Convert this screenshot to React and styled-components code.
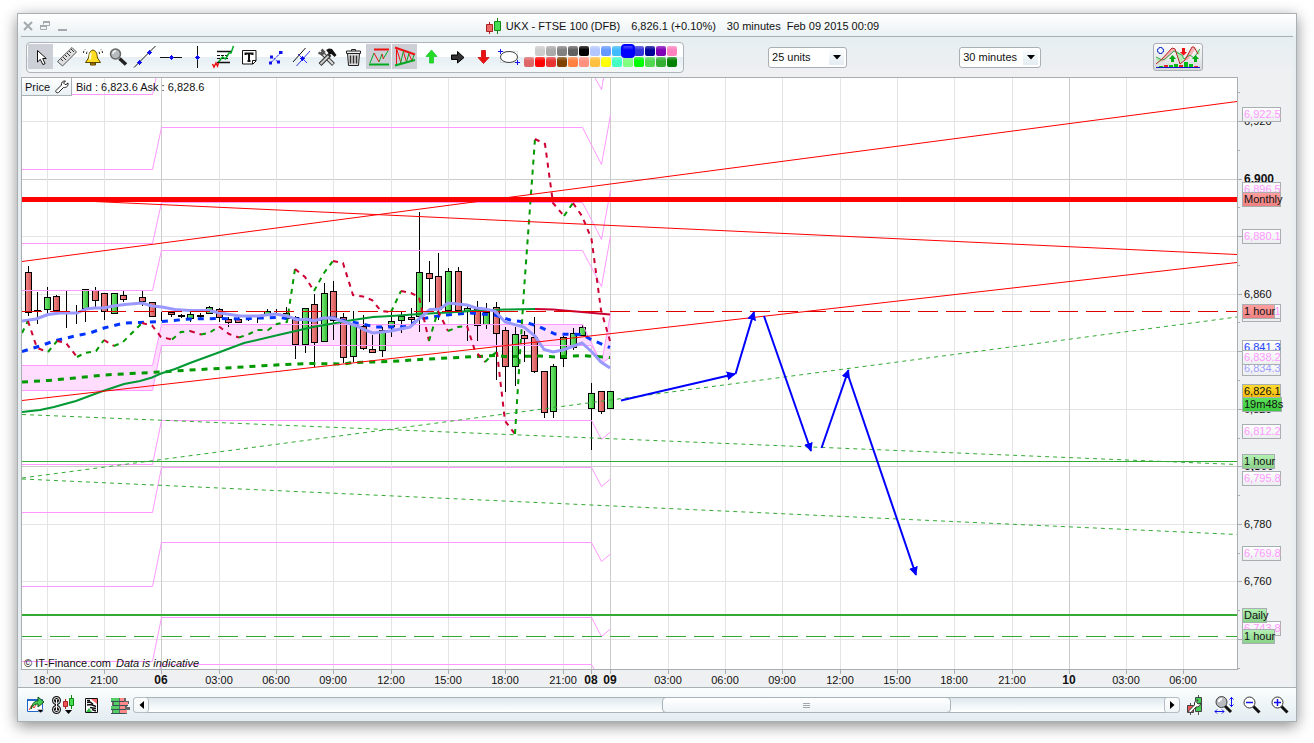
import styled, { createGlobalStyle } from "styled-components";

const GlobalStyle = createGlobalStyle`
  * {
    box-sizing: border-box;
  }
  body {
    margin: 0;
    padding: 13px 17px 21px;
    background: #fff;
    color: #111;
    font-family: "Liberation Sans", Arial, sans-serif;
    font-size: 11px;
    line-height: 14px;
  }
  button,
  select {
    font: inherit;
    color: inherit;
    margin: 0;
    padding: 0;
  }
`;

const Window = styled.main`
  padding: 0 3px;
  border: 1px solid #a9afb3;
  background: #e6eef2;
  box-shadow: 0 4px 14px rgba(0, 0, 0, 0.45);
`;

const TitleBar = styled.header`
  display: flex;
  align-items: center;
  height: 22px;
  margin: 0 -3px;
  padding: 2px 3px 0;
  background: linear-gradient(#fff, #eaf1f4);
`;

const WindowControls = styled.div`
  display: flex;
  gap: 3px;
`;

const ControlButton = styled.button`
  display: flex;
  border: 0;
  background: none;
`;

const Title = styled.h1`
  display: flex;
  flex: 1;
  align-items: center;
  justify-content: center;
  gap: 11px;
  margin: 0;
  padding-left: 3px;
  font-size: 11px;
  font-weight: normal;
`;

const TitlePart = styled.span`
  display: flex;
  align-items: center;
  gap: 4px;
  white-space: pre;
`;

const ToolRow = styled.div`
  display: flex;
  align-items: center;
  height: 41px;
  padding-left: 5px;
  border-top: 1px solid #a9b0b4;
  background: linear-gradient(#e6eef2, #eff0f2);
`;

const ToolPanel = styled.div`
  display: flex;
  align-items: center;
  gap: 1px;
  height: 31px;
  padding: 0 6px 1px 1px;
  border: 1px solid #aeb4b9;
  border-radius: 4px;
  background: linear-gradient(#fbfdfe, #fff 48%, #e5eff4 50%, #f4f8fa);
`;

const ToolButton = styled.button`
  display: flex;
  width: 25px;
  height: 25px;
  border: 0;
  background: ${(p) => (p.$active ? "#ccd0d6" : "none")};
`;

const Palette = styled.div`
  display: flex;
  flex-direction: column;
  align-items: flex-end;
  gap: 1px;
  padding-left: 2px;
`;

const PaletteRow = styled.div`
  display: flex;
  gap: 1px;
`;

const Swatch = styled.button`
  position: relative;
  z-index: ${(p) => (p.$active ? 1 : 0)};
  width: 10px;
  height: 10px;
  border: 0;
  border-radius: 2px;
  background: linear-gradient(rgba(255, 255, 255, 0.3), rgba(255, 255, 255, 0) 40%)
    ${(p) => p.$color};
  box-shadow: ${(p) => (p.$active ? `0 0 0 2px ${p.$color}` : "none")};
`;

const Spacer = styled.div`
  flex: ${(p) => p.$grow};
`;

const SelectBox = styled.div`
  position: relative;
  width: ${(p) => p.$width}px;
`;

const Select = styled.select`
  display: block;
  width: 100%;
  height: 21px;
  padding-left: 3px;
  border: 1px solid #a9afb4;
  border-radius: 3px;
  background: #fff;
  appearance: none;
`;

const SelectArrow = styled.span`
  position: absolute;
  top: 3px;
  right: 3px;
  display: flex;
  align-items: center;
  justify-content: center;
  width: 15px;
  height: 15px;
  background: linear-gradient(#fafcfd, #e2ecf2);
  pointer-events: none;
`;

const IndicatorButton = styled.button`
  display: flex;
  width: 50px;
  height: 28px;
  border: 1px solid #a9afb4;
  border-radius: 3px;
  background: linear-gradient(#fdfdfd, #d6d8da);
`;

const ChartArea = styled.section`
  position: relative;
`;

const ChartSvg = styled.svg`
  display: block;
  width: 100%;
  height: auto;
  background: #eff0f2;
`;

const ChartHeader = styled.div`
  position: absolute;
  top: 0;
  left: 0;
  display: flex;
  align-items: center;
  gap: 4px;
`;

const PriceButton = styled.button`
  display: flex;
  align-items: center;
  justify-content: space-between;
  width: 51px;
  height: 19px;
  padding: 0 2px 0 3px;
  border: 1px solid #a9b0b4;
  background: linear-gradient(#fff, #e9f0f4);
`;

const Copyright = styled.div`
  position: absolute;
  left: 3px;
  bottom: 17px;
  display: flex;
  gap: 5px;
`;

const Footer = styled.footer`
  display: flex;
  align-items: center;
  height: 34px;
  margin: 0 -3px;
  padding: 1px 6px 0 8px;
  border-top: 1px solid #a9b0b4;
  background: linear-gradient(#fafefe, #e3ecf1);
`;

const FooterButton = styled.button`
  display: flex;
  width: ${(p) => p.$width || 20}px;
  height: 20px;
  margin-right: ${(p) => p.$gap || 0}px;
  border: 0;
  background: none;
`;

const Scrollbar = styled.div`
  display: flex;
  flex: 1;
  height: 16px;
  margin-right: 6px;
  border: 1px solid #a9b4ba;
  border-radius: 4px;
  background: linear-gradient(#dfe9ee, #f6fafb 70%, #fff);
`;

const ScrollButton = styled.button`
  display: flex;
  align-items: center;
  justify-content: center;
  width: 14px;
  border: 0;
  border-radius: 3px;
  background: linear-gradient(#fff, #f1f6f8);
  box-shadow: 0 0 0 1px #b4bec4;
`;

const ScrollTrack = styled.div`
  display: flex;
  flex: 1;
`;

const ScrollThumb = styled.div`
  display: flex;
  align-items: center;
  justify-content: center;
  width: 28.5%;
  margin: -1px 0 -1px 50.5%;
  border: 1px solid #a9b4ba;
  border-radius: 4px;
  background: linear-gradient(#fff, #edf3f6);
`;

const Icon = ({ w = 25, h = 25, children }) => (
  <svg width={w} height={h} viewBox={`0 0 ${w} ${h}`} fill="none" aria-hidden="true">
    {children}
  </svg>
);

const Cross = ({ x, y }) => (
  <path
    d={`M${x - 2.5} ${y}h5M${x} ${y - 2.5}v5M${x - 1.5} ${y - 1.5}l3 3M${x + 1.5} ${y - 1.5}l-3 3`}
    stroke="#1111ee"
  />
);

const tools = [
  {
    name: "Pointer",
    active: true,
    icon: (
      <path d="M9.5 6.5V18l2.8-2.6 2.6 5.2 2.2-1-2.4-5.1h3.6Z" fill="#fff" stroke="#111" />
    ),
  },
  {
    name: "Ruler",
    icon: (
      <>
        <path d="m3.5 17.5 14.5-14 4.5 4.5-14 14Z" fill="#ddd" stroke="#555" />
        <path d="m7 15 2 2m0-4 3 3m-1-5 2 2m0-4 3 3m-1-5 2 2m0-4 3 3" stroke="#333" />
      </>
    ),
  },
  {
    name: "Alarm",
    icon: (
      <>
        <path
          d="M13 6c-4 1-4 5-4.5 8L5.500 18.500h15L17.5 14c-.5-3-.5-7-4.500-8Z"
          fill="#ffdd22"
          stroke="#5a4600"
        />
        <path d="M11 9c-1 2-1 4-1 6.500" stroke="#fffbd0" strokeWidth="2" />
        <path d="M10.5 19h5v2h-5z" fill="#cc8800" stroke="#5a4600" />
        <path
          d="M3.500 9c0-1.500.5-2.500 1.500-3.500M6.500 10c0-1.500.5-2.500 1-3M22.500 9c0-1.500-.5-2.500-1.500-3.500M19.500 10c0-1.500-.5-2.500-1-3"
          stroke="#222"
          strokeDasharray="2 1"
        />
      </>
    ),
  },
  {
    name: "Zoom",
    icon: (
      <>
        <path d="m13.5 14.500 6.500 6" stroke="#222" strokeWidth="3.5" />
        <circle cx="9.5" cy="10" r="5" fill="#b5bbbf" stroke="#666" strokeWidth="1.5" />
        <path d="M7 10c0-2 1-3 3-3" stroke="#f2f4f5" strokeWidth="1.5" />
      </>
    ),
  },
  {
    name: "Trend line",
    icon: (
      <>
        <path d="M2 23.5 23.5 2" stroke="#111" />
        <Cross x={7.5} y={18.5} />
        <Cross x={17.5} y={8.5} />
      </>
    ),
  },
  {
    name: "Horizontal line",
    icon: (
      <>
        <path d="M2 13.5h22" stroke="#111" />
        <Cross x={13.5} y={13.5} />
      </>
    ),
  },
  {
    name: "Vertical line",
    icon: (
      <>
        <path d="M13.5 2v22" stroke="#111" />
        <Cross x={13.5} y={13.5} />
      </>
    ),
  },
  {
    name: "Fibonacci",
    icon: (
      <>
        <path d="M7 7.5h14M7 18.5h13" stroke="#111" strokeWidth="1.5" />
        <path d="M7 11.5h12M7 14.5h12" stroke="#111" strokeDasharray="3 1" />
        <path d="m2.500 20 1.500 3 2-4 1.500 3 1-3" stroke="#e11" strokeWidth="1.5" />
        <path d="m8.500 18 4-5 3 2 3.500-6h2l2.500-7" stroke="#0a2" strokeWidth="1.5" />
      </>
    ),
  },
  {
    name: "Text",
    icon: (
      <>
        <path d="M6.5 6.5h13.5V17l-3 3H6.5Z" fill="#fff" stroke="#111" />
        <path d="M16.5 20v-3.5H20" stroke="#111" />
        <path d="M9.5 11V9.5h7V11M13 9.500v8M11.5 17h3" stroke="#111" strokeWidth="2" />
      </>
    ),
  },
  {
    name: "Segment",
    icon: (
      <>
        <path d="m9 18.500 9-9" stroke="#11e" strokeDasharray="3 1" />
        <path d="m9.500 12.500 7 6" stroke="#33f" strokeDasharray="2 1" />
        <path d="M7 17.500h3v3H7zM17 7h3.500v3h-3.500zM8 11.500h3v3H8zM15 16.500h3v3h-3z" fill="#11e" />
      </>
    ),
  },
  {
    name: "Parallel lines",
    icon: (
      <>
        <path d="M5 18 17.5 4" stroke="#111" />
        <path d="M8.500 22 22 7M10 10l9 9" stroke="#33e" />
        <Cross x={14.5} y={14.5} />
      </>
    ),
  },
  {
    name: "Settings",
    icon: (
      <>
        <path d="m7 8 12.5 12.5" stroke="#444" strokeWidth="4" />
        <path d="m8 9 11 11" stroke="#ddd" strokeWidth="2" />
        <path d="M4.500 8.500 8 10.500 10 8 7.500 5.500" stroke="#555" strokeWidth="2.5" />
        <path d="M6 20.500 16 10.500" stroke="#333" strokeWidth="4" />
        <path d="m6.500 20 8-8" stroke="#ccc" strokeWidth="2" />
        <path d="m12 6 3-1.500 3 .5 4.500 6-2 2-3-3-2 .5-3-4Z" fill="#111" />
      </>
    ),
  },
  {
    name: "Delete",
    icon: (
      <>
        <path d="M7.5 9.5h12l-1 12h-10Z" fill="#ddd" stroke="#222" />
        <path d="M6.5 7h14v2.5h-14zM11.5 7V5.5h4V7" fill="#eee" stroke="#222" />
        <path d="M10.5 11.5v8M13.5 11.5v8M16.5 11.5v8" stroke="#333" strokeWidth="1.5" />
      </>
    ),
  },
  {
    name: "Range lines",
    active: true,
    icon: (
      <>
        <path d="M8 5.5h15" stroke="#e11" strokeWidth="2" />
        <path d="M3 20.5h20" stroke="#0a2" strokeWidth="2" />
        <path d="M4 19 8 9M13 18l3-8M17 15l5-8" stroke="#0a2" />
        <path d="m8 9 5 9M16 10l1.500 5" stroke="#e11" />
      </>
    ),
  },
  {
    name: "Triangle lines",
    active: true,
    icon: (
      <>
        <path d="m3 3.500 20 7" stroke="#e11" strokeWidth="2" />
        <path d="m3 21.500 20-5.500" stroke="#0a2" strokeWidth="2" />
        <path d="M4.500 5v15M5 6l4 13M11.500 8l3 10M17 10l3 7" stroke="#e11" />
        <path d="m8.500 19 3-12M14.500 18 17 9M20 17l2-6" stroke="#0a2" />
      </>
    ),
  },
  {
    name: "Up arrow",
    icon: <path d="m13.500 6 5.500 6.500h-3.500V19h-4v-6.500H8Z" fill="#2d2" stroke="#3c4" />,
  },
  {
    name: "Right arrow",
    icon: <path d="M7.500 11h6V7.500l6.500 6-6.500 5.500v-3.500h-6Z" fill="#333" stroke="#000" />,
  },
  {
    name: "Down arrow",
    icon: <path d="M11.500 6.500h4v7H19l-5.500 6L8 13.500h3.500Z" fill="#e11" stroke="#c22" />,
  },
  {
    name: "Ellipse",
    icon: (
      <>
        <path d="M4.5 7.5h17v11h-17z" stroke="#bbb" strokeDasharray="1 1" />
        <ellipse cx="13" cy="13" rx="8.5" ry="5.5" fill="#fff" stroke="#444" />
        <path d="M2 7.5h5M4.5 5v5M19 18.5h5M21.5 16v5" stroke="#11e" />
      </>
    ),
  },
];

const paletteTop = [
  "#cccccc", "#aaaaaa", "#808080", "#606060", "#000000", "#b4c6ff", "#6699ff",
  "#40bbff", "#0000ff", "#3333dd", "#000099", "#8000b8", "#ff80c0",
];

const paletteBottom = [
  "#dd6666", "#ff0000", "#e83333", "#804000", "#ff8040", "#ff9080", "#ffc040",
  "#ffff00", "#44ffc4", "#80ff80", "#00ff00", "#50d850", "#33b033", "#008000",
];

const timeLabels = [
  [47, "18:00"], [104, "21:00"], [161, "06", true], [219, "03:00"], [276, "06:00"],
  [333, "09:00"], [391, "12:00"], [448, "15:00"], [505, "18:00"], [563, "21:00"],
  [591, "08", true], [610, "09", true], [668, "03:00"], [725, "06:00"],
  [782, "09:00"], [840, "12:00"], [897, "15:00"], [954, "18:00"], [1012, "21:00"],
  [1069, "10", true], [1126, "03:00"], [1183, "06:00"],
];

// levels fully covered by a tag have no label
const priceLevels = [
  [121, "6,920"], [179, "6,900", true], [236], [294, "6,860"], [351],
  [409, "6,820"], [466, "6,800", true], [524, "6,780"], [581, "6,760"], [639],
];

const halfTicks = [92, 150, 207, 265, 322, 380, 438, 495, 553, 610, 668];

const PINK = "#ff99ff";

// top, text, text colour, fill, width
const priceTags = [
  [107, "6,922.5", PINK, "url(#tagWhite)", 38],
  [182, "6,896.5", PINK, "url(#tagWhite)", 38],
  [192, "Monthly", "#111", "url(#tagRed)", 38],
  [229, "6,880.1", PINK, "url(#tagWhite)", 38],
  [307, "", PINK, "url(#tagWhite)", 38],
  [304, "6,854.1", PINK, "url(#tagWhite)", 38],
  [304, "1 hour", "#111", "url(#tagRed)", 32],
  [340, "6,841.3", "#2244ff", "url(#tagWhite)", 38],
  [361, "6,834.3", "#a0a0f8", "url(#tagWhite)", 38],
  [350, "6,838.2", PINK, "url(#tagWhite)", 38],
  [384, "6,826.1", "#111", "url(#tagGold)", 38],
  [397, "19m48s", "#111", "url(#tagLime)", 39],
  [424, "6,812.2", PINK, "url(#tagWhite)", 38],
  [454, "1 hour", "#111", "url(#tagGreen)", 32],
  [471, "6,795.8", PINK, "url(#tagWhite)", 38],
  [546, "6,769.8", PINK, "url(#tagWhite)", 38],
  [621, "6,743.8", PINK, "url(#tagWhite)", 38],
  [608, "Daily", "#111", "url(#tagGreen)", 24],
  [629, "1 hour", "#111", "url(#tagGreen)", 32],
];

// x, high, low, body top, body bottom, rising
const candles = [
  [28, 266, 316, 272, 312, 0], [37, 292, 324, 310, 311, 0], [47, 287, 314, 297, 309, 1],
  [56, 295, 311, 296, 310, 0], [66, 291, 328, 311, 311, 0], [76, 305, 324, 311, 311, 0],
  [85, 289, 322, 289, 308, 1], [95, 287, 308, 290, 300, 0], [104, 293, 320, 293, 311, 0],
  [114, 293, 314, 293, 313, 1], [123, 291, 302, 295, 299, 0], [142, 291, 306, 297, 301, 0],
  [152, 302, 317, 302, 316, 0], [161, 312, 321, 314, 314, 0], [171, 311, 317, 312, 314, 0],
  [181, 314, 318, 315, 316, 0], [190, 312, 322, 314, 318, 1], [200, 313, 320, 315, 316, 0],
  [209, 306, 314, 307, 313, 1], [219, 308, 322, 309, 317, 0], [228, 317, 327, 319, 322, 0],
  [238, 317, 323, 319, 322, 0], [248, 318, 321, 319, 319, 0], [257, 317, 323, 319, 319, 0],
  [267, 309, 315, 311, 314, 1], [276, 309, 315, 312, 312, 0], [286, 307, 318, 313, 318, 1],
  [295, 316, 359, 317, 344, 0], [305, 308, 353, 308, 344, 1], [314, 294, 367, 304, 342, 0],
  [324, 283, 342, 293, 341, 1], [333, 281, 340, 291, 320, 0], [343, 313, 363, 317, 357, 0],
  [353, 311, 362, 324, 356, 1], [363, 315, 350, 326, 348, 0], [372, 335, 353, 349, 352, 0],
  [382, 327, 357, 330, 350, 1], [391, 312, 337, 321, 326, 1], [401, 311, 333, 316, 320, 1],
  [411, 308, 326, 317, 319, 0], [419, 212, 332, 272, 316, 1], [429, 261, 302, 273, 278, 0],
  [438, 253, 320, 276, 309, 0], [448, 268, 313, 271, 310, 1], [458, 267, 312, 271, 310, 0],
  [467, 306, 341, 308, 311, 1], [477, 301, 341, 309, 325, 0], [486, 303, 329, 312, 324, 1],
  [496, 302, 380, 307, 333, 0], [505, 327, 392, 330, 366, 0], [515, 327, 386, 334, 366, 1],
  [524, 331, 362, 335, 338, 0], [534, 317, 373, 337, 371, 0], [544, 371, 418, 371, 412, 0],
  [553, 364, 418, 366, 411, 1], [563, 336, 367, 337, 358, 1], [573, 328, 350, 333, 347, 1],
  [582, 325, 336, 327, 335, 1], [591, 383, 450, 393, 408, 1], [601, 391, 414, 391, 411, 0],
  [610, 391, 409, 391, 408, 1],
];

const pivots = [
  "22,94.5 152.5,94.5 156,78",
  "595,78 601.5,89.5 603.5,78",
  "22,169.5 152.5,169.5 161.5,127.5 582.5,127.5 601.5,164.5 610.5,115",
  "22,243.5 152.5,243.5 161.5,202.5 582.5,202.5 601.5,239.5 610.5,190",
  "22,290.5 152.5,290.5 161.5,250.5 582.5,250.5 601.5,286.5 610.5,236",
  "22,365.5 152.5,365.5 161.5,324.5 582.5,324.5 601.5,363.5 610.5,314",
  "22,390.5 152.5,390.5 161.5,345.5 591.5,345.5 601.5,363.5 610.5,357",
  "22,464.5 152.5,464.5 161.5,420.5 591.5,420.5 601.5,439.5 610.5,432",
  "22,512.5 152.5,512.5 161.5,467.5 591.5,467.5 601.5,486.5 610.5,479",
  "22,586.5 152.5,586.5 161.5,542.5 591.5,542.5 601.5,561.5 610.5,554",
  "22,661.5 152.5,661.5 161.5,617.5 591.5,617.5 601.5,636.5 610.5,629",
  "160,669 161.5,664.5 591.5,664.5 594,669",
];

const band =
  "22,365.5 152.5,365.5 161.5,324.5 582.5,324.5 601.5,363.5 610.5,314 610.5,357 601.5,363.5 591.5,345.5 161.5,345.5 152.5,390.5 22,390.5";

const slowAverage =
  "22,412 40,410 54,407 76,401 100,392 124,384 140,381 152,377.5 161,373.5 175,369 190,363 220,352 244,343 276,335.5 313,327 333,323.5 353,320 373,317 391,316 420,314 448,312.5 480,310.5 505,309.5 535,309";
const slowAverageDown = "535,309 553,309.5 570,311 582,312 610,314.5";
const baseAverage =
  "22,382 48,380.5 75,378 104,375 140,373 161,372 190,370 219,368.5 250,366.5 276,365 310,363.5 344,364 353,362.5 391,361.5 420,359.5 448,358 495,355.5 505,356.5 540,356 555,357 582,355.5 610,357.5";
const midAverage =
  "22,351.5 40,346 54,341 75,336 90,333 104,328 124,323 140,322.5 161,321.5 190,319 220,318.5 240,319 260,318 280,317.5 290,319 304,319 315,320.5 325,318 335,318 345,321 360,323.5 375,327 391,327 405,326.5 410,325 420,319 445,315 470,313 495,315 510,320 525,322 540,327 555,334 582,334.5 592,340 610,347.5";
const fastAverage =
  "22,321 36,319 48,314.5 60,313 77,313 86,309 95,308 104,308 113,306 125,304.5 142,303 152,306 162,307 175,309.5 190,310.5 209,310.5 220,313 240,316 258,316 275,314 287,316 298,320 306,319 314,321 323,318 333,318 345,322 357,326 365,330 373,333 391,331 410,327 420,318 430,309.5 440,309 448,303 467,305 476,308 485,309 495,311 505,322 524,327 535,336 544,349.5 553,352 563,350 582,343 592,352 601,362 610,368";

const signals = [
  ["22,333 28,321", 1],
  ["28,321 37,348 48,352", 0],
  ["48,352 57,341", 1],
  ["57,341 66,343 77,357", 0],
  ["77,357 85,353 96,351 104,340", 1],
  ["104,340 114,346", 0],
  ["114,346 123,342 133,332 142,323", 1],
  ["142,323 152,325.5 161,337 172,339.5", 0],
  ["172,339.5 181,332 190,331", 1],
  ["190,331 201,334.5", 0],
  ["201,334.5 209,333 219,326.5", 1],
  ["219,326.5 229,334 239,337.5", 0],
  ["239,337.5 249,334 257,330 268,330 277,324 287,322 295,269", 1],
  ["295,269 305,277 314,291", 0],
  ["314,291 324,273 333,261", 1],
  ["333,261 343,263 353,295 363,296.5 372,300 381,311 391,312", 0],
  ["391,312 401,291", 1],
  ["401,291 411,293 419,297 429,341", 0],
  ["429,341 438,311", 1],
  ["438,311 448,331", 0],
  ["448,331 458,327 467,326", 1],
  ["467,326 475,351 485,362", 0],
  ["485,362 491,356 497,352", 1],
  ["497,352 505,421 515,434", 0],
  ["515,434 524,290 535,139", 1],
  ["535,139 545,144 553,203 564,216", 0],
  ["564,216 573,203", 1],
  ["573,203 582,216 591.5,239 601,310 610,341", 0],
];

const arrows = [
  [621, 400.5, 735, 374],
  [735.5, 374, 754, 312],
  [764, 316, 811, 451],
  [821.5, 448, 848.5, 370],
  [849, 378, 916, 575],
];

const TagGradient = ({ id, from, to }) => (
  <linearGradient id={id} x1="0" y1="0" x2="0" y2="1">
    <stop offset="0" stopColor={from} />
    <stop offset="1" stopColor={to} />
  </linearGradient>
);

const PriceChart = () => (
  <ChartSvg viewBox="21 77 1272 610" role="img" aria-label="UKX FTSE 100 price chart">
    <defs>
      <clipPath id="plot">
        <rect x="22" y="78" width="1215" height="591" />
      </clipPath>
      <marker
        id="arrowHead"
        viewBox="0 0 10 10"
        refX="9"
        refY="5"
        markerWidth="9"
        markerHeight="9"
        markerUnits="userSpaceOnUse"
        orient="auto"
      >
        <path d="M0 0 10 5 0 10Z" fill="#0000ff" />
      </marker>
      <TagGradient id="tagWhite" from="#fff" to="#ebedef" />
      <TagGradient id="tagRed" from="#ffa0a0" to="#ec8080" />
      <TagGradient id="tagGreen" from="#b4f2b4" to="#88d088" />
      <TagGradient id="tagGold" from="#ffdc30" to="#f8b808" />
      <TagGradient id="tagLime" from="#5ce45c" to="#3cc83c" />
      <linearGradient id="rise">
        <stop offset="0" stopColor="#77ee77" />
        <stop offset="1" stopColor="#33bb33" />
      </linearGradient>
      <linearGradient id="fall">
        <stop offset="0" stopColor="#f88888" />
        <stop offset="1" stopColor="#cc5555" />
      </linearGradient>
    </defs>

    <rect x="21.5" y="77.5" width="1216" height="592" fill="#fff" stroke="#a9aeb2" />

    <g>
      {priceLevels.map(([y, , strong]) => (
        <path key={y} d={`M22 ${y + 0.5}H1237`} stroke={strong ? "#cccccc" : "#e4e4e4"} />
      ))}
      {timeLabels.map(([x, , strong]) => (
        <path key={x} d={`M${x + 0.5} 78V669`} stroke={strong ? "#cccccc" : "#e4e4e4"} />
      ))}
    </g>

    <g clipPath="url(#plot)" fill="none">
      <polygon points={band} fill="#ffddff" />

      {candles.map(([x, high, low, top, bottom, rising]) => (
        <g key={x} stroke="#000">
          <path d={`M${x + 0.5} ${high}V${low}`} />
          <rect
            x={x - 2.5}
            y={top + 0.5}
            width="6"
            height={bottom - top}
            fill={rising ? "url(#rise)" : "url(#fall)"}
          />
        </g>
      ))}

      {pivots.map((points) => (
        <polyline key={points} points={points} stroke={PINK} />
      ))}

      <polyline points={baseAverage} stroke="#009900" strokeWidth="3" strokeDasharray="6 6" />
      <polyline points={midAverage} stroke="#0033ff" strokeWidth="3" strokeDasharray="6 6" />
      <polyline points={slowAverage} stroke="#009933" strokeWidth="2" />
      <polyline points={slowAverageDown} stroke="#cc0033" strokeWidth="2" />
      <polyline points={fastAverage} stroke="#9999ff" strokeWidth="3" />
      {signals.map(([points, rising]) => (
        <polyline
          key={points}
          points={points}
          stroke={rising ? "#009900" : "#cc0033"}
          strokeWidth="2"
          strokeDasharray="5 5"
        />
      ))}

      <g stroke="#ff0000">
        <path d="M22 199.5H1237" strokeWidth="5" />
        <path d="M22 261.5 1237 101.5M62 200 1237 254.5M22 400.5 1237 262.5" />
      </g>
      <path d="M22 311.5H1237" stroke="#dd0000" strokeDasharray="20 8" />

      <g stroke="#33aa33">
        <path
          d="M22 414.5 1237 464.5M22 478 1237 317M22 479 1237 534.5"
          strokeDasharray="4 4"
        />
        <path d="M22 461.5H1237" />
        <path d="M22 615H1237" strokeWidth="2" />
        <path d="M22 636.5H1237" strokeDasharray="20 8" />
      </g>

      {arrows.map(([x1, y1, x2, y2]) => (
        <line
          key={x1}
          x1={x1}
          y1={y1}
          x2={x2}
          y2={y2}
          stroke="#0000ff"
          strokeWidth="2"
          markerEnd="url(#arrowHead)"
        />
      ))}
    </g>

    <g stroke="#a9aeb2">
      {halfTicks.map((y) => (
        <path key={y} d={`M1238 ${y + 0.5}h2`} />
      ))}
      {priceLevels.map(([y]) => (
        <path key={y} d={`M1238 ${y + 0.5}h4`} />
      ))}
      {timeLabels.map(([x]) => (
        <path key={x} d={`M${x + 0.5} 670v4`} />
      ))}
    </g>

    <g fill="#111" fontSize="11">
      {priceLevels
        .filter(([, label]) => label)
        .map(([y, label, strong]) => (
          <text
            key={y}
            x="1244"
            y={y + 4}
            fontSize={strong ? 12 : 11}
            fontWeight={strong ? "bold" : "normal"}
          >
            {label}
          </text>
        ))}
      {timeLabels.map(([x, label, strong]) => (
        <text
          key={x}
          x={x}
          y="684"
          textAnchor="middle"
          fontSize={strong ? 12 : 11}
          fontWeight={strong ? "bold" : "normal"}
        >
          {label}
        </text>
      ))}
      {priceTags.map(([top, label, color, fill, width]) => (
        <g key={`${top}${label}`}>
          <rect x="1242.5" y={top + 0.5} width={width} height="14" fill={fill} stroke="#a9aeb2" />
          {label && (
            <text x="1244" y={top + 11} fill={color}>
              {label}
            </text>
          )}
        </g>
      ))}
    </g>
  </ChartSvg>
);

const SelectField = ({ label, value, width, options }) => (
  <SelectBox $width={width}>
    <Select aria-label={label} defaultValue={value}>
      {options.map((option) => (
        <option key={option}>{option}</option>
      ))}
    </Select>
    <SelectArrow>
      <Icon w={8} h={5}>
        <path d="M0 0h8L4 4.500Z" fill="#000" />
      </Icon>
    </SelectArrow>
  </SelectBox>
);

const App = () => {
  return (
    <>
      <GlobalStyle />
      <Window>
        <TitleBar>
          <WindowControls>
            <ControlButton aria-label="Close">
              <Icon w={14} h={14}>
                <path d="m3 3 8 8M11 3l-8 8" stroke="#a4a9ae" strokeWidth="2" />
              </Icon>
            </ControlButton>
            <ControlButton aria-label="Restore">
              <Icon w={14} h={14}>
                <path d="M5.5 5.500v-3h6v4h-3M2.5 6.500h6v4h-6z" stroke="#a4a9ae" />
                <path d="M5 3h7M2 7h7" stroke="#a4a9ae" strokeWidth="2" />
              </Icon>
            </ControlButton>
            <ControlButton aria-label="Minimize">
              <Icon w={14} h={14}>
                <path d="M3 11h9" stroke="#a4a9ae" strokeWidth="2" />
              </Icon>
            </ControlButton>
          </WindowControls>
          <Title>
            <TitlePart>
              <Icon w={16} h={16}>
                <path d="M3.5 4v12" stroke="#a22" />
                <path d="M.5 6.500h6v7h-6z" fill="#e66" stroke="#a22" />
                <path d="M11.5 0v16" stroke="#181" />
                <path d="M8.5 3.500h6v9h-6z" fill="#4d5" stroke="#181" />
              </Icon>
              UKX - FTSE 100 (DFB)
            </TitlePart>
            <TitlePart>6,826.1 (+0.10%)</TitlePart>
            <TitlePart>{"30 minutes  Feb 09 2015 00:09"}</TitlePart>
          </Title>
        </TitleBar>

        <ToolRow>
          <ToolPanel>
            {tools.map((tool) => (
              <ToolButton key={tool.name} $active={tool.active} aria-label={tool.name}>
                <Icon>{tool.icon}</Icon>
              </ToolButton>
            ))}
            <Palette>
              <PaletteRow>
                {paletteTop.map((color) => (
                  <Swatch
                    key={color}
                    $color={color}
                    $active={color === "#0000ff"}
                    aria-label={color}
                  />
                ))}
              </PaletteRow>
              <PaletteRow>
                {paletteBottom.map((color) => (
                  <Swatch key={color} $color={color} aria-label={color} />
                ))}
              </PaletteRow>
            </Palette>
          </ToolPanel>
          <Spacer $grow={15} />
          <SelectField
            label="Units"
            value="25 units"
            width={79}
            options={["25 units", "50 units", "100 units"]}
          />
          <Spacer $grow={20} />
          <SelectField
            label="Time frame"
            value="30 minutes"
            width={82}
            options={["15 minutes", "30 minutes", "1 hour"]}
          />
          <Spacer $grow={20} />
          <IndicatorButton aria-label="Indicators">
            <Icon w={48} h={26}>
              <path d="m5 18 13-14 4 1-12 12ZM30 17l8-14 4 1-8 12Z" fill="#f4b4b8" />
              <path d="m2 13 6 3-4 4ZM21 6l5 3 4 6-4 5ZM42 5l4 3-1 4Z" fill="#b4ecb4" />
              <path d="m2 13 6 3 3-1 9-8 8 4 2 4 6-4 4 3 6-9" stroke="#3a4" />
              <path d="m2 20 6-5 10-11 3 1 5 15 5-4 7-13 2 0 4 7" stroke="#b22" />
              <path d="M5 5V3.500h3V5h1.500v3H8v1.500H5V8H3.500V5Z" fill="#fff" stroke="#24c" />
              <path d="M28 4h3v4h2l-3.500 3.500L26 8h2Z" fill="#e11" />
              <path
                d="m18.500 11 3.500 4h-2v3h-3v-3h-2ZM41.500 11l3.500 4h-2v3h-3v-3h-2Z"
                fill="#0a1"
              />
              <path d="M5 22h4v2H5zM15 21h4v3h-4zM20 20h4v4h-4zM30 18h4v6h-4zM35 20h4v4h-4z" fill="#0b1" />
              <path d="M10 21h4v3h-4zM25 21h4v3h-4zM40 22h4v2h-4z" fill="#d22" />
              <path d="M2 23.500h44" stroke="#11c" />
            </Icon>
          </IndicatorButton>
          <Spacer $grow={16} />
        </ToolRow>

        <ChartArea>
          <PriceChart />
          <ChartHeader>
            <PriceButton>
              Price
              <Icon w={15} h={15}>
                <path
                  d="M2 11.500 7.500 6C7 3.500 9 1.500 11.500 2L9.500 4l1.500 1.500h1L14 4c.5 3-1.500 5-4.500 4.500L4.500 13.500c-1.500 1-3.500-.5-2.500-2Z"
                  fill="#fff"
                  stroke="#222"
                />
              </Icon>
            </PriceButton>
            <span>Bid : 6,823.6 Ask : 6,828.6</span>
          </ChartHeader>
          <Copyright>
            <span>© IT-Finance.com</span>
            <em>Data is indicative</em>
          </Copyright>
        </ChartArea>

        <Footer>
          <FooterButton $gap={6} aria-label="Export chart">
            <Icon w={20} h={20}>
              <path d="M1.5 4.500h15v12h-15z" fill="#fff" stroke="#26c" />
              <path d="M1 5h15" stroke="#26c" strokeWidth="2" />
              <path d="m3 15 3-5 2 3 2-3" stroke="#e33" />
              <path d="M5 14C6 9 8 6 12 6V2l6 5-6 5V9c-3 0-5 1-7 5Z" fill="#4c5" stroke="#151" />
              <path d="M11 14.500h7L14.500 18Z" fill="#000" stroke="#fff" strokeWidth=".5" />
            </Icon>
          </FooterButton>
          <FooterButton $width={24} $gap={8} aria-label="Link charts">
            <Icon w={24} h={20}>
              <g stroke="#111" strokeWidth="3">
                <rect x="1.5" y="2.500" width="6" height="6" rx="3" />
                <rect x="1.5" y="11.500" width="6" height="6" rx="3" />
                <path d="M4.5 5v10" />
              </g>
              <g stroke="#fff">
                <rect x="1.5" y="2.500" width="6" height="6" rx="3" />
                <rect x="1.5" y="11.500" width="6" height="6" rx="3" />
                <path d="M4.5 5v10" />
              </g>
              <path d="M13.5 4v10" stroke="#a22" />
              <path d="M11.5 6.500h4v5h-4z" fill="#e55" stroke="#a22" />
              <path d="M19.5 0v14" stroke="#181" />
              <path d="M17.5 3.500h4v7h-4z" fill="#4d5" stroke="#181" />
              <path d="M13 15h7l-3.500 4Z" fill="#000" />
            </Icon>
          </FooterButton>
          <FooterButton $gap={6} aria-label="News">
            <Icon w={20} h={20}>
              <path d="M1.5 3.500h12v14h-12z" fill="#fff" stroke="#111" />
              <path d="M7 4h6v5Z" fill="#f66" />
              <path d="m2 17 3-4 3 4Z" fill="#3b4" />
              <path
                d="M3 5.500h3M3 7.500l3-.5 3 2M3 10l4-.5 5 2M6 12.500l6 1M8 14.500l4 1.500"
                stroke="#111"
                strokeWidth="1.5"
              />
            </Icon>
          </FooterButton>
          <FooterButton $gap={3} aria-label="Market depth">
            <Icon w={20} h={20}>
              <path d="M2 3h14v3h3v3h-2v3h3v3h-3v4H2Z" fill="#666" />
              <path d="M1 3h8v3H1zM4 7h5v3H4zM1 11h8v3H1zM3 15h6v3H3z" fill="#5c6" />
              <path d="M10 3h4v3h-4zM10 7h8v3h-8zM10 11h5v3h-5zM10 15h7v3h-7z" fill="#f88" />
              <path d="M1 6.500h13M3 10.500h15M1 14.500h14M1 18.500h14" stroke="#355" />
            </Icon>
          </FooterButton>
          <Scrollbar>
            <ScrollButton aria-label="Scroll left">
              <Icon w={5} h={8}>
                <path d="M5 0v8L.5 4Z" fill="#000" />
              </Icon>
            </ScrollButton>
            <ScrollTrack>
              <ScrollThumb>
                <Icon w={7} h={7}>
                  <path d="M0 1.500h7M0 3.500h7M0 5.500h7" stroke="#a0a8ae" />
                </Icon>
              </ScrollThumb>
            </ScrollTrack>
            <ScrollButton aria-label="Scroll right">
              <Icon w={5} h={8}>
                <path d="M0 0v8l4.500-4Z" fill="#000" />
              </Icon>
            </ScrollButton>
          </Scrollbar>
          <FooterButton $gap={8} aria-label="Chart settings">
            <Icon w={20} h={20}>
              <path d="M4.5 8v12M12.500 0v20" stroke="#555" />
              <path d="M1.5 10.500h6v7h-6z" fill="#e55" stroke="#444" />
              <path d="M9.5 2.500h6v14h-6z" fill="#4c5" stroke="#444" />
              <path
                d="M3 15.500 8.500 10C8 7 9.500 5 12 5l-1.500 2 1.500 2 2.500-1c0 3-2 4-4.500 4L5 17.500c-1.500.5-2.500-.5-2-2Z"
                fill="#fff"
                stroke="#333"
              />
            </Icon>
          </FooterButton>
          <FooterButton $gap={8} aria-label="Fit zoom">
            <Icon w={20} h={20}>
              <path d="m11 11 6 6" stroke="#111" strokeWidth="3" />
              <circle cx="7.5" cy="7" r="5.5" fill="#b8bcc0" stroke="#444" />
              <path d="M5 7c0-2 1-3 3-3" stroke="#fff" strokeWidth="2" />
              <path
                d="M17.5 2v10M15.5 4.500l2-2 2 2M15.5 9.500l2 2 2-2M1 16.500h9M3 14.500l-2 2 2 2M8 14.500l2 2-2 2"
                stroke="#11e"
              />
            </Icon>
          </FooterButton>
          <FooterButton $gap={8} aria-label="Zoom out">
            <Icon w={20} h={20}>
              <path d="m11 11 6.500 6.500" stroke="#111" strokeWidth="3" />
              <circle cx="7.5" cy="7.5" r="5.5" fill="#fff" stroke="#333" />
              <path d="M4 7.500h7" stroke="#11e" strokeWidth="1.5" />
            </Icon>
          </FooterButton>
          <FooterButton aria-label="Zoom in">
            <Icon w={20} h={20}>
              <path d="m11 11 6.500 6.500" stroke="#111" strokeWidth="3" />
              <circle cx="7.5" cy="7.5" r="5.5" fill="#fff" stroke="#333" />
              <path d="M4 7.500h7M7.5 4v7" stroke="#11e" strokeWidth="1.5" />
            </Icon>
          </FooterButton>
        </Footer>
      </Window>
    </>
  );
};

export default App;
